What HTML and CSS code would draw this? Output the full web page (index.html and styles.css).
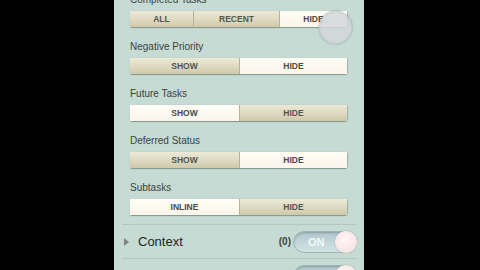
FILE: index.html
```html
<!DOCTYPE html>
<html>
<head>
<meta charset="utf-8">
<link rel="stylesheet" href="styles.css">
</head>
<body>
<div class="screen">
  <div class="group first">
    <div class="label">Completed Tasks</div>
    <div class="seg">
      <div class="opt w64">ALL</div>
      <div class="opt w86">RECENT</div>
      <div class="opt on grow">HIDE</div>
    </div>
  </div>
  <div class="group">
    <div class="label">Negative Priority</div>
    <div class="seg">
      <div class="opt half">SHOW</div>
      <div class="opt on grow">HIDE</div>
    </div>
  </div>
  <div class="group">
    <div class="label">Future Tasks</div>
    <div class="seg">
      <div class="opt on half">SHOW</div>
      <div class="opt grow">HIDE</div>
    </div>
  </div>
  <div class="group">
    <div class="label">Deferred Status</div>
    <div class="seg">
      <div class="opt half">SHOW</div>
      <div class="opt on grow">HIDE</div>
    </div>
  </div>
  <div class="group last">
    <div class="label">Subtasks</div>
    <div class="seg">
      <div class="opt on half">INLINE</div>
      <div class="opt grow">HIDE</div>
    </div>
  </div>
  <div class="row">
    <span class="tri"></span>
    <span class="rowname">Context</span>
    <span class="count">(0)</span>
    <div class="toggle"><span class="ontext">ON</span><span class="knob"></span></div>
  </div>
  <div class="row">
    <span class="tri"></span>
    <span class="rowname">Project</span>
    <span class="count">(0)</span>
    <div class="toggle"><span class="ontext">ON</span><span class="knob"></span></div>
  </div>
  <div class="touch"></div>
</div>
</body>
</html>
```
FILE: styles.css
```css
html, body {
  margin: 0;
  padding: 0;
  background: #000;
  height: 270px;
  overflow: hidden;
}
.screen {
  position: relative;
  box-sizing: border-box;
  width: 250px;
  height: 270px;
  margin-left: 114px;
  padding: 0 17px 0 16px;
  background: #c6dbd3;
  font-family: "Liberation Sans", Arial, sans-serif;
  overflow: hidden;
}
.group {
  margin-bottom: 14px;
}
.group.first {
  margin-top: -6px;
}
.group.last {
  margin-bottom: 9px;
}
.label {
  font-size: 10px;
  line-height: 12px;
  height: 12px;
  color: #3c4240;
  margin-bottom: 5px;
}
.seg {
  display: flex;
  height: 16px;
  width: 217px;
  border-radius: 2px;
  box-shadow: 0 1px 1px rgba(60, 70, 60, 0.45), 1px 0 1px rgba(60, 70, 60, 0.25);
}
.opt {
  box-sizing: border-box;
  height: 16px;
  line-height: 16px;
  text-align: center;
  font-size: 8.5px;
  font-weight: bold;
  color: #555550;
  background: linear-gradient(#ece9d6, #dcd7bd 60%, #cfc9aa);
  border-right: 1px solid #b9b498;
}
.opt:last-child {
  border-right: none;
}
.opt.on {
  background: linear-gradient(#fffdf7, #fbf5ea);
  color: #4a4a46;
}
.w64 { width: 64px; }
.w86 { width: 86px; }
.half { width: 110px; }
.grow { flex: 1; }
.row {
  display: flex;
  align-items: center;
  box-sizing: border-box;
  height: 34px;
  margin: 0 -10px 0 -8px;
  padding: 0 0 0 2px;
  border-top: 1px solid #b3c8c0;
}
.tri {
  width: 0;
  height: 0;
  border-top: 4px solid transparent;
  border-bottom: 4px solid transparent;
  border-left: 5px solid #7c8682;
}
.rowname {
  margin-left: 9px;
  font-size: 13px;
  color: #222624;
  flex: 1;
}
.count {
  font-size: 10px;
  font-weight: bold;
  color: #3e4442;
  margin-right: 2px;
}
.toggle {
  position: relative;
  box-sizing: border-box;
  width: 64px;
  height: 22px;
  border-radius: 11px;
  border: 1px solid #a2b4b2;
  background: linear-gradient(#afc7cb, #c6d9dc 60%, #d4e3e4);
  box-shadow: inset 0 1px 2px rgba(60, 80, 90, 0.35);
}
.ontext {
  position: absolute;
  left: 14px;
  top: 3px;
  font-size: 11px;
  line-height: 14px;
  font-weight: bold;
  color: #f4fafb;
}
.knob {
  position: absolute;
  right: -1px;
  top: -1px;
  width: 22px;
  height: 22px;
  border-radius: 50%;
  background: radial-gradient(circle at 45% 40%, #fef6f7, #f6e4e7 70%, #e2cdd0);
  box-shadow: 0 0 1px rgba(60, 60, 60, 0.6);
}
.touch {
  position: absolute;
  left: 205px;
  top: 11px;
  width: 33px;
  height: 33px;
  border-radius: 50%;
  background: rgba(212, 216, 218, 0.85);
  box-shadow: 0 0 2px rgba(110, 120, 120, 0.7), inset 0 0 3px rgba(140, 150, 150, 0.4);
}
```
